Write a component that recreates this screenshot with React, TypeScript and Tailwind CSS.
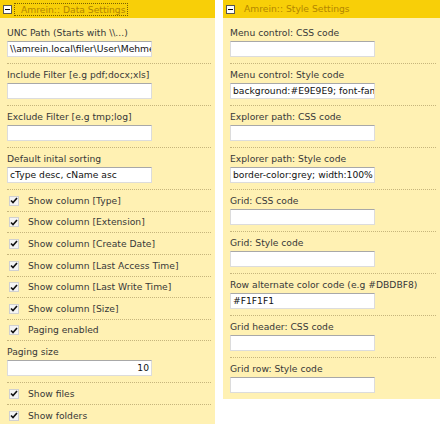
import React from "react";

type Item =
  | { kind: "field"; label: string; value?: string; right?: boolean }
  | { kind: "check"; label: string; h: string };

const DATA: Item[] = [
  { kind: "field", label: "UNC Path (Starts with \\\\...)", value: "\\\\amrein.local\\filer\\User\\Mehmet" },
  { kind: "field", label: "Include Filter [e.g pdf;docx;xls]" },
  { kind: "field", label: "Exclude Filter [e.g tmp;log]" },
  { kind: "field", label: "Default inital sorting", value: "cType desc, cName asc" },
  { kind: "check", label: "Show column [Type]", h: "h-[22px]" },
  { kind: "check", label: "Show column [Extension]", h: "h-[21px]" },
  { kind: "check", label: "Show column [Create Date]", h: "h-[22px]" },
  { kind: "check", label: "Show column [Last Access Time]", h: "h-[22px]" },
  { kind: "check", label: "Show column [Last Write Time]", h: "h-[21px]" },
  { kind: "check", label: "Show column [Size]", h: "h-[22px]" },
  { kind: "check", label: "Paging enabled", h: "h-[21px]" },
  { kind: "field", label: "Paging size", value: "10", right: true },
  { kind: "check", label: "Show files", h: "h-[22px]" },
  { kind: "check", label: "Show folders", h: "h-[22px]" },
];

const STYLE: Item[] = [
  { kind: "field", label: "Menu control: CSS code" },
  { kind: "field", label: "Menu control: Style code", value: "background:#E9E9E9; font-family:Verdana" },
  { kind: "field", label: "Explorer path: CSS code" },
  { kind: "field", label: "Explorer path: Style code", value: "border-color:grey; width:100%" },
  { kind: "field", label: "Grid: CSS code" },
  { kind: "field", label: "Grid: Style code" },
  { kind: "field", label: "Row alternate color code (e.g #DBDBF8)", value: "#F1F1F1" },
  { kind: "field", label: "Grid header: CSS code" },
  { kind: "field", label: "Grid row: Style code" },
];

function Minus() {
  return (
    <span className="flex h-[9px] w-[9px] shrink-0 items-center justify-center border border-[#555] bg-white">
      <span className="h-px w-[5px] bg-black" />
    </span>
  );
}

function Check() {
  return (
    <span className="flex h-[10px] w-[10px] shrink-0 items-center justify-center border border-[#d0d0d0] bg-[#f4f4f4]">
      <svg width="8" height="7" viewBox="0 0 8 7">
        <path d="M1 3.5 L3 5.5 L7 1" fill="none" stroke="#111" strokeWidth="1.6" />
      </svg>
    </span>
  );
}

function Row({ item, first }: { item: Item; first: boolean }) {
  const sep = first ? "" : "border-t border-dotted border-[#c6b57c]";
  if (item.kind === "check") {
    return (
      <div className={`flex items-center gap-[9px] pl-[2px] ${item.h} ${sep}`}>
        <Check />
        <span className="whitespace-nowrap">{item.label}</span>
      </div>
    );
  }
  return (
    <div className={`flex flex-col pb-[6px] ${first ? "pt-[8px]" : "pt-[4px]"} ${sep}`}>
      <span className="h-[13px] leading-[13px] whitespace-nowrap">{item.label}</span>
      <div
        className={`mt-[2px] h-[16px] w-[145px] overflow-hidden whitespace-nowrap border border-[#dcdcdc] border-t-[#a8a8a8] bg-white px-[2px] leading-[14px] text-[#111] ${
          item.right ? "text-right" : ""
        }`}
      >
        {item.value ?? ""}
      </div>
    </div>
  );
}

function Panel({ title, items, focused, width }: { title: string; items: Item[]; focused?: boolean; width: string }) {
  return (
    <div className={`flex flex-col bg-[#fff1b3] ${width}`}>
      <div className="flex h-[18px] items-center bg-[#f8cf08] pl-[3px]">
        <Minus />
        {focused ? (
          <span className="ml-[2px] border border-dotted border-[#7a6000] pl-[6px] pr-[1px] leading-[11px] text-[#b38600]">
            {title}
          </span>
        ) : (
          <span className="ml-[9px] text-[#b38600]">{title}</span>
        )}
      </div>
      <div className="flex flex-col pl-[7px] pr-[4px] text-[#383838]">
        {items.map((it, i) => (
          <Row key={i} item={it} first={i === 0} />
        ))}
      </div>
    </div>
  );
}

export default function App() {
  return (
    <div
      className="flex h-[424px] w-[440px] items-start gap-[8px] overflow-hidden bg-white text-[9.2px]"
      style={{ fontFamily: '"DejaVu Sans", Verdana, sans-serif' }}
    >
      <Panel title="Amrein:: Data Settings" items={DATA} focused width="w-[215px]" />
      <Panel title="Amrein:: Style Settings" items={STYLE} width="w-[217px]" />
    </div>
  );
}
